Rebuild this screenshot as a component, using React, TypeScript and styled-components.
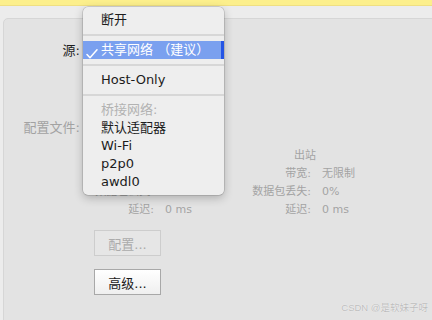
import React from 'react';
import styled, { createGlobalStyle } from 'styled-components';

// ==============================================================================
// Data
// ==============================================================================

type MenuEntry =
  | { kind: 'item'; label: string; checked?: boolean; highlighted?: boolean }
  | { kind: 'header'; label: string }
  | { kind: 'separator' };

const MENU: MenuEntry[] = [
  { kind: 'item', label: '断开' },
  { kind: 'separator' },
  { kind: 'item', label: '共享网络 （建议）', checked: true, highlighted: true },
  { kind: 'separator' },
  { kind: 'item', label: 'Host-Only' },
  { kind: 'separator' },
  { kind: 'header', label: '桥接网络:' },
  { kind: 'item', label: '默认适配器' },
  { kind: 'item', label: 'Wi-Fi' },
  { kind: 'item', label: 'p2p0' },
  { kind: 'item', label: 'awdl0' },
];

const STATS = [
  { title: '入站', rows: [['带宽:', '无限制'], ['数据包丢失:', '0%'], ['延迟:', '0 ms']] },
  { title: '出站', rows: [['带宽:', '无限制'], ['数据包丢失:', '0%'], ['延迟:', '0 ms']] },
];

// ==============================================================================
// Styled Components
// ==============================================================================

const GlobalStyle = createGlobalStyle`
  html, body {
    margin: 0;
    padding: 0;
    width: 432px;
    height: 320px;
    overflow: hidden;
    background: #ececec;
    font-family: 'DejaVu Sans', 'Noto Sans CJK SC', sans-serif;
    -webkit-font-smoothing: antialiased;
  }
`;

const Window = styled.div`
  position: relative;
  width: 432px;
  height: 320px;
  overflow: hidden;
`;

const InfoBar = styled.div`
  height: 5px;
  background: #fcef8c;
  border-bottom: 1px solid #efdf82;
`;

const Content = styled.div`
  padding: 12px 0 0 3px;
`;

const Panel = styled.div`
  width: 460px;
  height: 340px;
  background: #e3e3e3;
  border: 1px solid #d6d6d6;
  border-radius: 5px 0 0 0;
  display: flex;
  flex-direction: column;
`;

const FieldRow = styled.div<{ $top: number }>`
  display: grid;
  grid-template-columns: 76px auto;
  column-gap: 3px;
  align-items: center;
  height: 18px;
  margin-top: ${(p) => p.$top}px;
`;

const FieldLabel = styled.span<{ $disabled?: boolean }>`
  text-align: right;
  font-size: 13px;
  line-height: 18px;
  color: ${(p) => (p.$disabled ? '#a2a2a2' : '#1e1e1e')};
`;

const StatsGrid = styled.div`
  display: grid;
  grid-template-columns: repeat(2, 157px);
  margin: 10px 0 0 84px;
`;

const StatColumn = styled.div`
  display: grid;
  grid-template-columns: 66px 1fr;
  column-gap: 11px;
  grid-auto-rows: 18px;
  align-items: center;
  font-size: 11px;
  line-height: 18px;
  color: #a3a3a3;
`;

const StatTitle = styled.div`
  grid-column: 1 / -1;
  padding-left: 49px;
`;

const StatLabel = styled.span`
  text-align: right;
  white-space: nowrap;
`;

const StatValue = styled.span`
  white-space: nowrap;
`;

const ButtonStack = styled.div`
  display: flex;
  flex-direction: column;
  gap: 13px;
  margin: 11px 0 0 90px;
`;

const PushButton = styled.button`
  box-sizing: border-box;
  width: 67px;
  height: 26px;
  padding: 0;
  font-family: inherit;
  font-size: 13px;
  color: #1a1a1a;
  background: linear-gradient(#ffffff, #efefef);
  border: 1px solid #a8a8a8;
  border-radius: 0;

  &:disabled {
    color: #ababab;
    background: #e6e6e6;
    border-color: #cdcdcd;
  }
`;

const Menu = styled.div`
  position: absolute;
  left: 83px;
  top: 7px;
  width: 141px;
  box-sizing: border-box;
  padding: 4px 0;
  background: #eeeeee;
  border-radius: 5px;
  box-shadow: 0 0 0 0.5px rgba(0, 0, 0, 0.22), 0 3px 10px rgba(0, 0, 0, 0.24);
  font-size: 13px;
`;

const MenuItem = styled.div<{ $highlighted?: boolean; $header?: boolean }>`
  position: relative;
  height: 18px;
  line-height: 18px;
  padding-left: 18px;
  white-space: nowrap;
  color: ${(p) => (p.$highlighted ? '#ffffff' : p.$header ? '#b2b2b2' : '#1c1c1c')};
  background: ${(p) => (p.$highlighted ? '#7aa0ef' : 'transparent')};
  box-shadow: ${(p) => (p.$highlighted ? 'inset -3px 0 0 #2454e4' : 'none')};
`;

const CheckMark = styled.svg`
  position: absolute;
  left: 3px;
  top: 8px;
`;

const MenuSeparator = styled.div`
  height: 2px;
  margin: 5px 0;
  background: #d7d7d7;
`;

const Watermark = styled.div`
  position: absolute;
  right: 4px;
  bottom: 6px;
  font-family: 'Liberation Sans', 'Noto Sans CJK SC', sans-serif;
  font-size: 9.5px;
  line-height: 12px;
  color: #bdbdbd;
  text-shadow: 0 0 1px #ffffff;
`;

// ==============================================================================
// Main Component
// ==============================================================================

const App: React.FC = () => {
  return (
    <Window>
      <GlobalStyle />
      <InfoBar />
      <Content>
        <Panel>
          <FieldRow $top={23}>
            <FieldLabel>源:</FieldLabel>
          </FieldRow>
          <FieldRow $top={59}>
            <FieldLabel $disabled>配置文件:</FieldLabel>
          </FieldRow>

          <StatsGrid>
            {STATS.map((col) => (
              <StatColumn key={col.title}>
                <StatTitle>{col.title}</StatTitle>
                {col.rows.map(([label, value]) => (
                  <React.Fragment key={label}>
                    <StatLabel>{label}</StatLabel>
                    <StatValue>{value}</StatValue>
                  </React.Fragment>
                ))}
              </StatColumn>
            ))}
          </StatsGrid>

          <ButtonStack>
            <PushButton disabled>配置...</PushButton>
            <PushButton>高级...</PushButton>
          </ButtonStack>
        </Panel>
      </Content>

      <Menu>
        {MENU.map((entry, i) => {
          if (entry.kind === 'separator') return <MenuSeparator key={i} />;
          if (entry.kind === 'header') return <MenuItem key={i} $header>{entry.label}</MenuItem>;
          return (
            <MenuItem key={i} $highlighted={entry.highlighted}>
              {entry.checked && (
                <CheckMark width="12" height="10" viewBox="0 0 12 10">
                  <path d="M1 5.5 L4 8.8 L11 0.8" fill="none" stroke="#ffffff" strokeWidth="1.5" strokeLinecap="round" strokeLinejoin="round" />
                </CheckMark>
              )}
              {entry.label}
            </MenuItem>
          );
        })}
      </Menu>

      <Watermark>CSDN @是软妹子呀</Watermark>
    </Window>
  );
};

export default App;
